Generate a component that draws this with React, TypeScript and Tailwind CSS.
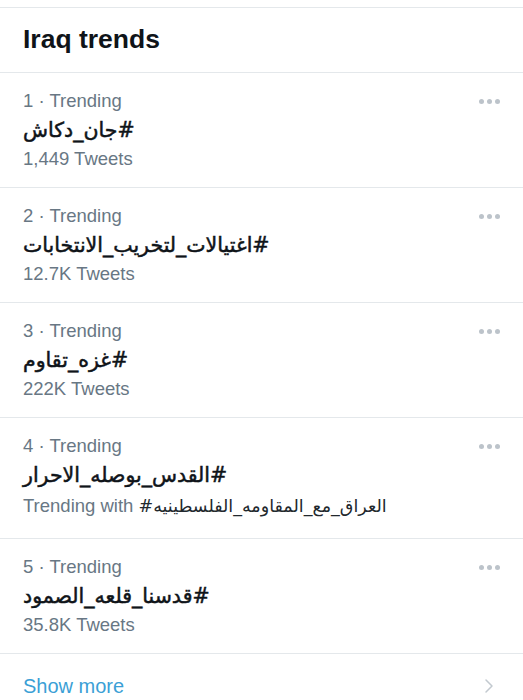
import { ChevronRight } from 'lucide-react';

interface Trend {
  rank: number;
  tag: string;
  meta: string;
  withTag?: string;
}

const trends: Trend[] = [
  { rank: 1, tag: '#جان_دكاش', meta: '1,449 Tweets' },
  { rank: 2, tag: '#اغتيالات_لتخريب_الانتخابات', meta: '12.7K Tweets' },
  { rank: 3, tag: '#غزه_تقاوم', meta: '222K Tweets' },
  {
    rank: 4,
    tag: '#القدس_بوصله_الاحرار',
    meta: 'Trending with',
    withTag: '#العراق_مع_المقاومه_الفلسطينيه',
  },
  { rank: 5, tag: '#قدسنا_قلعه_الصمود', meta: '35.8K Tweets' },
];

const arabicFont = { fontFamily: '"DejaVu Sans", "Noto Sans", sans-serif' };

function Dots() {
  return (
    <div className="flex gap-[3px]">
      <span className="h-[5px] w-[5px] rounded-full bg-[#bcc3ca]" />
      <span className="h-[5px] w-[5px] rounded-full bg-[#bcc3ca]" />
      <span className="h-[5px] w-[5px] rounded-full bg-[#bcc3ca]" />
    </div>
  );
}

function TrendRow({ trend }: { trend: Trend }) {
  return (
    <div
      className={`flex items-start justify-between border-b border-[#e4e8eb] pl-[23px] pr-[23px] pt-[16px] ${
        trend.withTag ? 'pb-[18px]' : 'pb-[16px]'
      }`}
    >
      <div className="flex flex-col">
        <div className="text-[18.5px] leading-[24px] text-[#687784]">
          {trend.rank} · Trending
        </div>
        <div
          dir="rtl"
          className="text-left text-[20.5px] leading-[34px] text-[#0f1419] [-webkit-text-stroke:0.5px_#0f1419]"
          style={arabicFont}
        >
          {trend.tag}
        </div>
        <div
          className={`text-[18.5px] text-[#687784] ${
            trend.withTag ? 'leading-[27px]' : 'leading-[24px]'
          }`}
        >
          {trend.meta}
          {trend.withTag && (
            <>
              {' '}
              <span className="text-[17.5px] text-[#22282d]" style={arabicFont}>
                {trend.withTag}
              </span>
            </>
          )}
        </div>
      </div>
      <div className="pt-[10px]">
        <Dots />
      </div>
    </div>
  );
}

export default function App() {
  return (
    <div
      className="w-[523px] h-[700px] overflow-hidden bg-white"
      style={{ fontFamily: '"Liberation Sans", Arial, sans-serif' }}
    >
      <div className="h-[7px]" />
      <div className="border-t border-b border-[#e4e8eb] h-[66px] flex items-center pl-[23px]">
        <h1 className="text-[26.5px] font-bold text-[#0f1419]">Iraq trends</h1>
      </div>
      {trends.map((t) => (
        <TrendRow key={t.rank} trend={t} />
      ))}
      <div className="flex items-center justify-between pl-[23px] pr-[22px] h-[64px]">
        <span className="text-[20px] leading-[24px] text-[#3b9fd6]">Show more</span>
        <ChevronRight className="w-[24px] h-[24px] text-[#c2c9cf]" strokeWidth={1.5} />
      </div>
    </div>
  );
}
